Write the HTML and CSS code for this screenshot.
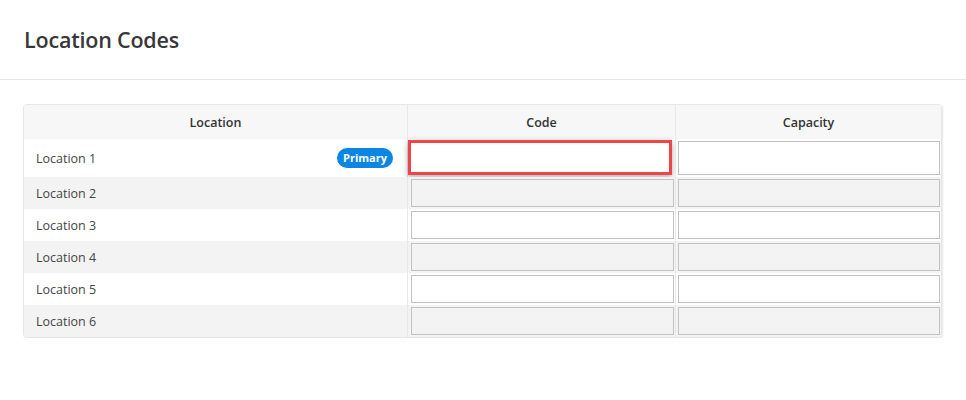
FILE: index.html
```html
<!DOCTYPE html>
<html>
<head>
<meta charset="utf-8">
<link rel="stylesheet" href="styles.css">
</head>
<body>
<header class="page-header">
  <h1 class="page-title">Location Codes</h1>
</header>
<main class="page-main">
  <div class="table-card">
    <table class="codes-table">
      <colgroup>
        <col class="col-loc">
        <col class="col-code">
        <col class="col-cap">
      </colgroup>
      <thead>
        <tr>
          <th>Location</th>
          <th class="sep">Code</th>
          <th class="sep">Capacity</th>
        </tr>
      </thead>
      <tbody>
        <tr class="row-first">
          <td class="loc"><div class="loc-inner"><span>Location 1</span><span class="badge">Primary</span></div></td>
          <td class="sep code-cell"><input class="field field-focus" type="text"></td>
          <td class="sep cap-cell"><input class="field" type="text"></td>
        </tr>
        <tr class="row-alt">
          <td class="loc"><div class="loc-inner"><span>Location 2</span></div></td>
          <td class="sep code-cell"><input class="field" type="text"></td>
          <td class="sep cap-cell"><input class="field" type="text"></td>
        </tr>
        <tr>
          <td class="loc"><div class="loc-inner"><span>Location 3</span></div></td>
          <td class="sep code-cell"><input class="field" type="text"></td>
          <td class="sep cap-cell"><input class="field" type="text"></td>
        </tr>
        <tr class="row-alt">
          <td class="loc"><div class="loc-inner"><span>Location 4</span></div></td>
          <td class="sep code-cell"><input class="field" type="text"></td>
          <td class="sep cap-cell"><input class="field" type="text"></td>
        </tr>
        <tr>
          <td class="loc"><div class="loc-inner"><span>Location 5</span></div></td>
          <td class="sep code-cell"><input class="field" type="text"></td>
          <td class="sep cap-cell"><input class="field" type="text"></td>
        </tr>
        <tr class="row-alt">
          <td class="loc"><div class="loc-inner"><span>Location 6</span></div></td>
          <td class="sep code-cell"><input class="field" type="text"></td>
          <td class="sep cap-cell"><input class="field" type="text"></td>
        </tr>
      </tbody>
    </table>
  </div>
</main>
</body>
</html>
```

FILE: styles.css
```css
* { box-sizing: border-box; }
html, body {
  margin: 0;
  padding: 0;
  background: #ffffff;
  font-family: "Open Sans", "Noto Sans", sans-serif;
  color: #444;
}
.page-header {
  height: 80px;
  border-bottom: 1px solid #e6e6e6;
  padding: 0 24px;
  display: flex;
  align-items: flex-start;
}
.page-title {
  margin: 25px 0 0 0;
  font-size: 21.5px;
  line-height: 30px;
  font-weight: 600;
  color: #383838;
  letter-spacing: -0.2px;
}
.page-main {
  padding: 24px 24px 0 23px;
}
.table-card {
  width: 919px;
  border: 1px solid #e6e6e6;
  border-radius: 4px;
  box-shadow: 1px 1px 2px rgba(0,0,0,0.10);
  overflow: hidden;
}
.codes-table {
  width: 100%;
  border-collapse: separate;
  border-spacing: 0;
  table-layout: fixed;
}
.col-loc { width: 383px; }
.col-code { width: 268px; }
.col-cap { width: 266px; }
.codes-table th {
  height: 34px;
  background: #f7f7f7;
  font-size: 12.5px;
  font-weight: 600;
  color: #333;
  text-align: center;
  padding: 0;
}
.sep { border-left: 1px solid #e8e8e8; }
.codes-table td {
  padding: 0;
  height: 32px;
  font-size: 12.5px;
  color: #454545;
}
.row-first td { height: 38px; }
.row-alt td { background: #f3f3f3; }
.loc-inner {
  display: flex;
  align-items: center;
  justify-content: space-between;
  padding: 0 14px 0 12px;
}
.badge {
  display: inline-block;
  height: 20px;
  line-height: 20px;
  padding: 0 6px;
  border-radius: 10px;
  background: #0b86e3;
  color: #fff;
  font-size: 11px;
  font-weight: 700;
}
.code-cell { padding: 0 1px 0 3px !important; }
.cap-cell { padding: 0 1px 0 2px !important; }
.field {
  display: block;
  width: 100%;
  height: 28px;
  margin: 0;
  border: 1px solid #c2c2c2;
  border-radius: 0;
  background: transparent;
  font: inherit;
  padding: 0 6px;
  outline: none;
}
.row-first .field { height: 34px; background: #fff; }
.row-first .field-focus {
  width: calc(100% + 1px);
  height: 35px;
  margin: -1px 0 0 -3px;
  border: 3px solid #ef4549;
  box-shadow: 0 2px 6px rgba(0,0,0,0.35);
}
```
